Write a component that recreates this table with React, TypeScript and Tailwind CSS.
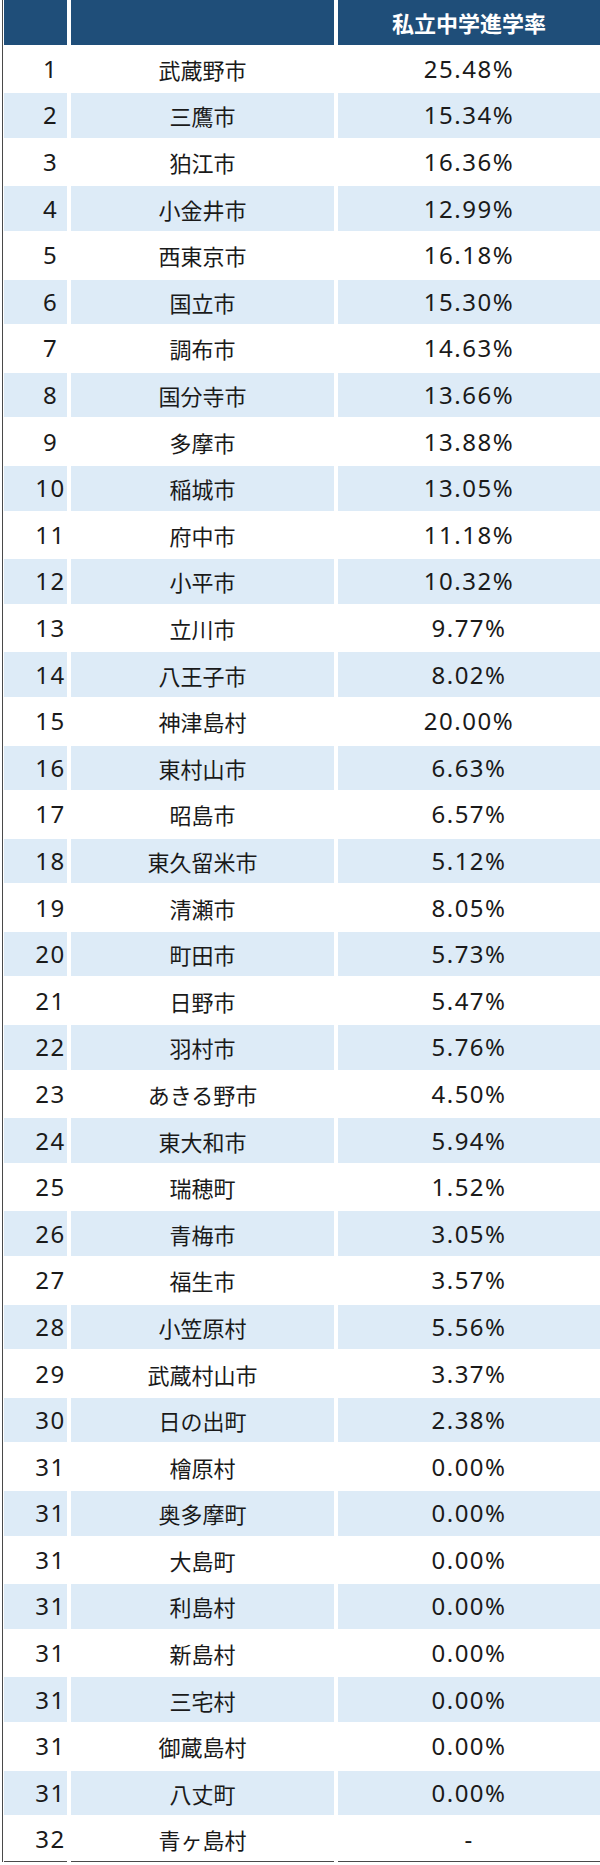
import React from 'react';

type Row = { rank: number; name: string; rate: string };

const rows: Row[] = [
  { rank: 1, name: '武蔵野市', rate: '25.48%' },
  { rank: 2, name: '三鷹市', rate: '15.34%' },
  { rank: 3, name: '狛江市', rate: '16.36%' },
  { rank: 4, name: '小金井市', rate: '12.99%' },
  { rank: 5, name: '西東京市', rate: '16.18%' },
  { rank: 6, name: '国立市', rate: '15.30%' },
  { rank: 7, name: '調布市', rate: '14.63%' },
  { rank: 8, name: '国分寺市', rate: '13.66%' },
  { rank: 9, name: '多摩市', rate: '13.88%' },
  { rank: 10, name: '稲城市', rate: '13.05%' },
  { rank: 11, name: '府中市', rate: '11.18%' },
  { rank: 12, name: '小平市', rate: '10.32%' },
  { rank: 13, name: '立川市', rate: '9.77%' },
  { rank: 14, name: '八王子市', rate: '8.02%' },
  { rank: 15, name: '神津島村', rate: '20.00%' },
  { rank: 16, name: '東村山市', rate: '6.63%' },
  { rank: 17, name: '昭島市', rate: '6.57%' },
  { rank: 18, name: '東久留米市', rate: '5.12%' },
  { rank: 19, name: '清瀬市', rate: '8.05%' },
  { rank: 20, name: '町田市', rate: '5.73%' },
  { rank: 21, name: '日野市', rate: '5.47%' },
  { rank: 22, name: '羽村市', rate: '5.76%' },
  { rank: 23, name: 'あきる野市', rate: '4.50%' },
  { rank: 24, name: '東大和市', rate: '5.94%' },
  { rank: 25, name: '瑞穂町', rate: '1.52%' },
  { rank: 26, name: '青梅市', rate: '3.05%' },
  { rank: 27, name: '福生市', rate: '3.57%' },
  { rank: 28, name: '小笠原村', rate: '5.56%' },
  { rank: 29, name: '武蔵村山市', rate: '3.37%' },
  { rank: 30, name: '日の出町', rate: '2.38%' },
  { rank: 31, name: '檜原村', rate: '0.00%' },
  { rank: 31, name: '奥多摩町', rate: '0.00%' },
  { rank: 31, name: '大島町', rate: '0.00%' },
  { rank: 31, name: '利島村', rate: '0.00%' },
  { rank: 31, name: '新島村', rate: '0.00%' },
  { rank: 31, name: '三宅村', rate: '0.00%' },
  { rank: 31, name: '御蔵島村', rate: '0.00%' },
  { rank: 31, name: '八丈町', rate: '0.00%' },
  { rank: 32, name: '青ヶ島村', rate: '-' },
];

const numFont = "font-['Noto_Sans','Noto_Sans_CJK_JP',sans-serif] text-[24px] tracking-[1.5px]";
const jpFont = "font-['Noto_Sans_CJK_JP',sans-serif] text-[22px]";

export default function App() {
  return (
    <div className="w-[600px] h-[1865px] bg-white pl-[2px] text-[#1a1a1a]">
      <div className="border-l border-[#4a4a4a] pl-px">
        <div className="grid grid-cols-[63px_263px_262px] gap-x-[4px] gap-y-[2px] auto-rows-[44.6px]">
          <div className="bg-[#1f4e79]" />
          <div className="bg-[#1f4e79]" />
          <div className="bg-[#1f4e79] flex items-center justify-center text-white font-bold font-['Noto_Sans_CJK_JP',sans-serif] text-[22px]">
            私立中学進学率
          </div>
          {rows.map((r, i) => {
            const bg = i % 2 === 1 ? 'bg-[#ddebf7]' : 'bg-white';
            const last = i === rows.length - 1 ? 'border-b border-[#4a4a4a]' : '';
            return (
              <React.Fragment key={i}>
                <div className={`${bg} ${last} flex items-center justify-center pl-[30px] leading-none ${numFont}`}>{r.rank}</div>
                <div className={`${bg} ${last} flex items-center justify-center leading-none ${jpFont}`}>{r.name}</div>
                <div className={`${bg} ${last} flex items-center justify-center leading-none ${numFont}`}>{r.rate}</div>
              </React.Fragment>
            );
          })}
        </div>
      </div>
    </div>
  );
}
